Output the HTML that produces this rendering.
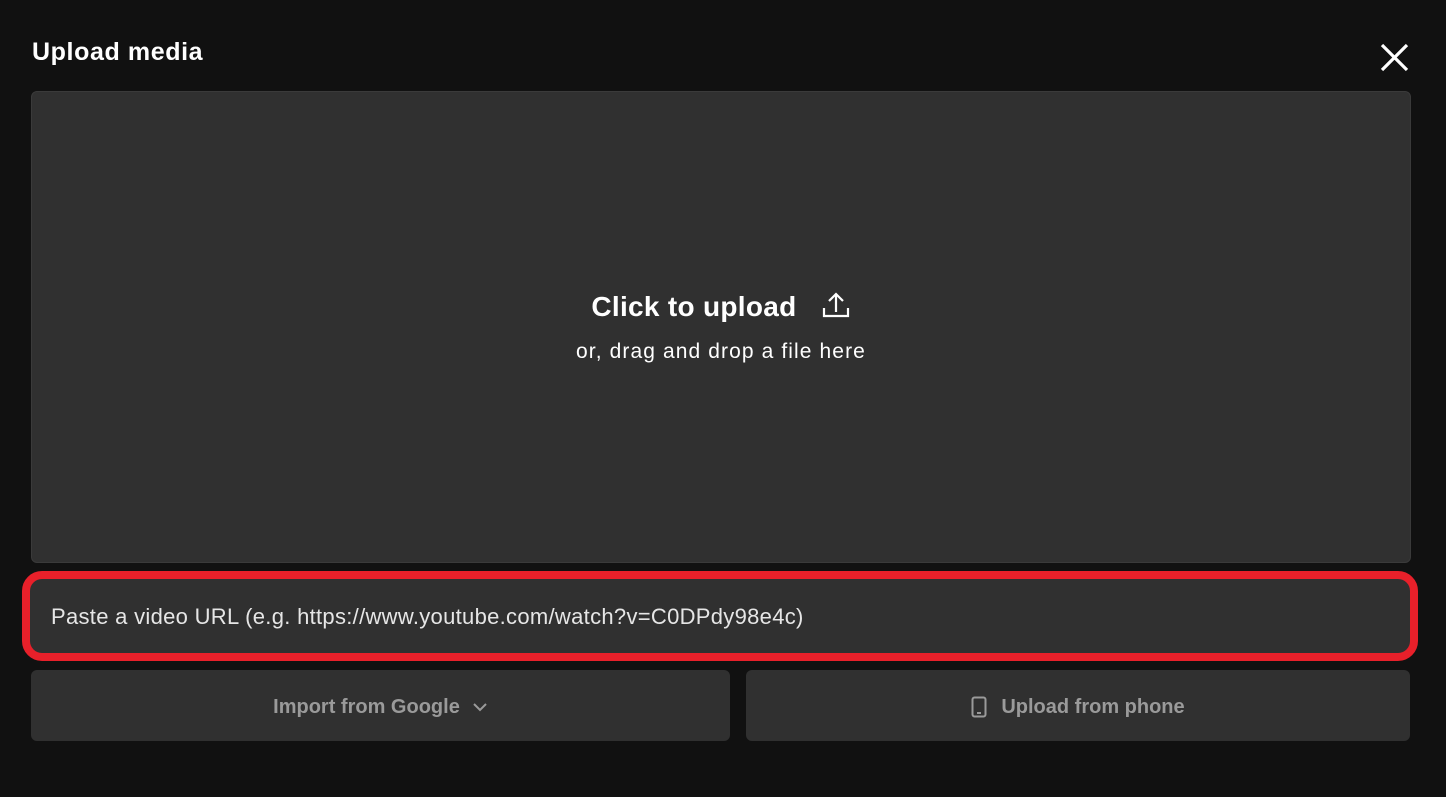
<!DOCTYPE html>
<html><head><style>
body{margin:0;width:1446px;height:797px;background:#111;font-family:"Liberation Sans",sans-serif;position:relative;overflow:hidden}
.t{position:absolute;left:32px;top:38px;color:#fff;font-size:25px;font-weight:bold;letter-spacing:0.6px}
.drop{position:absolute;left:31px;top:91px;width:1378px;height:470px;background:#303030;border:1px solid #3a3a3a;border-radius:6px}
.big{position:absolute;left:0;right:0;top:198px;text-align:center;color:#fff;font-size:28px;font-weight:bold;letter-spacing:0.3px}
.small{position:absolute;left:0;right:0;top:248px;text-align:center;color:#fff;font-size:21px;letter-spacing:1.1px}
.red{position:absolute;left:22px;top:571px;width:1380px;height:74px;border:8px solid #e8202a;border-radius:20px;background:#303030}
.red span{position:absolute;left:21px;top:25px;color:#e6e6e6;font-size:22px;letter-spacing:0.3px}
.btn{position:absolute;top:670px;height:71px;background:#303030;border-radius:6px;color:#9a9a9a;font-size:20px;font-weight:bold;display:flex;align-items:center;justify-content:center;padding-top:3px;box-sizing:border-box}
</style></head><body>
<div class="t">Upload media</div>
<svg style="position:absolute;left:1380px;top:43px" width="29" height="29" viewBox="0 0 29 29"><path d="M2 2L27 27M27 2L2 27" stroke="#fff" stroke-width="3.2"/></svg>
<div class="drop">
<div class="big">Click to upload <svg style="vertical-align:-4px;margin-left:16px" width="30" height="30" viewBox="0 0 30 30" fill="none" stroke="#fff" stroke-width="2.2"><path d="M15 22V4M8 11l7-7 7 7M3 18v8h24v-8"/></svg></div>
<div class="small">or, drag and drop a file here</div>
</div>
<div class="red"><span>Paste a video URL (e.g. https://www.youtube.com/watch?v=C0DPdy98e4c)</span></div>
<div class="btn" style="left:31px;width:699px">Import from Google <svg style="margin-left:12px" width="16" height="10" viewBox="0 0 16 10"><path d="M2 2l6 6 6-6" stroke="#9a9a9a" stroke-width="2" fill="none"/></svg></div>
<div class="btn" style="left:746px;width:664px"><svg style="margin-right:14px" width="16" height="22" viewBox="0 0 16 22"><rect x="1.5" y="1.5" width="13" height="19" rx="2" stroke="#9a9a9a" stroke-width="2" fill="none"/><path d="M6 17h4" stroke="#9a9a9a" stroke-width="2"/></svg>Upload from phone</div>
</body></html>
